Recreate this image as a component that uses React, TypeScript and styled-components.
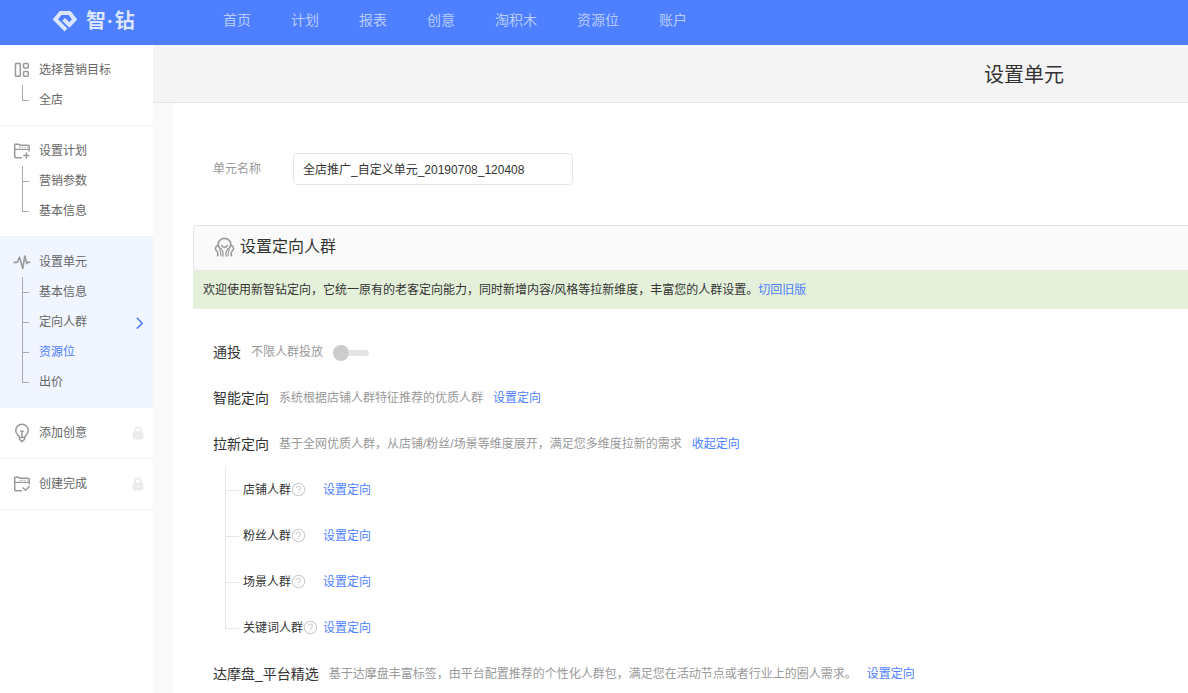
import React, { useState } from 'react';
import styled, { createGlobalStyle } from 'styled-components';

const GlobalStyle = createGlobalStyle`
  * { box-sizing: border-box; }
  body {
    margin: 0;
    background: #fff;
    color: #333;
    font: 12px/20px "Liberation Sans", "Noto Sans CJK SC", sans-serif;
  }
  h1, h2, h3, p, ul { margin: 0; padding: 0; font-weight: 400; }
  ul { list-style: none; }
  svg { display: block; flex: none; }
`;

const Page = styled.div`
  display: flex;
  flex-direction: column;
  height: 100vh;
`;

const Header = styled.header`
  display: flex;
  flex: none;
  height: 45px;
  padding-left: 52px;
  background: #4d7fff;
`;

const Logo = styled.a`
  display: flex;
  align-items: center;
  gap: 8px;
  width: 171px;
  height: 42px;
  color: #dbe5ff;
  text-decoration: none;
`;

const LogoText = styled.span`
  display: flex;
  gap: 1px;
  font-size: 20px;
  line-height: 24px;
  font-weight: 700;
`;

const Nav = styled.nav`
  display: flex;
  gap: 40px;
  height: 40px;
  align-items: center;
`;

const NavLink = styled.a`
  color: #b8ccff;
  font-size: 14px;
  text-decoration: none;
  white-space: nowrap;
`;

const Body = styled.div`
  display: flex;
  flex: 1;
  min-height: 0;
`;

const Sidebar = styled.aside`
  flex: none;
  width: 153px;
  background: #fff;
`;

const Step = styled.section<{ $active?: boolean }>`
  padding: 10px 0;
  background: ${(p) => (p.$active ? '#f0f5ff' : '#fff')};
  border-bottom: 1px solid ${(p) => (p.$active ? '#f0f5ff' : '#f2f2f2')};
`;

const StepHead = styled.div`
  display: flex;
  align-items: center;
  height: 30px;
  padding: 0 9px 0 13px;
`;

const StepTitle = styled.h3`
  flex: 1;
  padding-left: 8px;
  color: #666;
  font-size: 12px;
`;

const StepItem = styled.li`
  display: flex;
  height: 30px;
  padding: 0 9px 0 22px;
`;

const StepLink = styled.a<{ $current?: boolean }>`
  display: flex;
  flex: 1;
  align-items: center;
  justify-content: space-between;
  padding-left: 10px;
  color: ${(p) => (p.$current ? '#4d7fff' : '#666')};
  text-decoration: none;
`;

const Branch = styled.span<{ $width: number; $color: string; $last: boolean }>`
  display: flex;
  flex: none;
  flex-direction: column;
  width: ${(p) => p.$width}px;
  height: 100%;

  &::before {
    content: '';
    height: 50%;
    border: solid ${(p) => p.$color};
    border-width: 0 0 1px 1px;
  }

  &::after {
    content: '';
    height: 50%;
    border-left: 1px solid ${(p) => (p.$last ? 'transparent' : p.$color)};
  }
`;

const Main = styled.main`
  display: flex;
  flex: 1;
  flex-direction: column;
  min-width: 0;
`;

const TitleBar = styled.div`
  display: flex;
  flex: none;
  align-items: center;
  justify-content: flex-end;
  height: 58px;
  padding: 2px 124px 0 0;
  background: #f4f4f4;
  border-bottom: 1px solid #e5e5e5;
`;

const PageTitle = styled.h1`
  font-size: 20px;
  line-height: 28px;
`;

const Content = styled.div`
  flex: 1;
  min-height: 0;
  padding-left: 20px;
  border-left: 20px solid #fafafa;
  overflow: auto;
  scrollbar-width: none;
`;

const Field = styled.div`
  display: flex;
  align-items: center;
  padding: 50px 20px 40px;
`;

const FieldLabel = styled.label`
  width: 80px;
  color: #999;
`;

const TextInput = styled.input`
  width: 280px;
  height: 32px;
  padding: 0 9px 2px;
  border: 1px solid #e5e5e5;
  border-radius: 4px;
  background: #fff;
  color: #333;
  font: inherit;
  outline: none;
`;

const PanelHead = styled.div`
  display: flex;
  align-items: center;
  gap: 5px;
  height: 46px;
  padding: 0 20px 2px;
  background: #fafafa;
  border: 1px solid #e5e5e5;
  border-right: 0;
  border-radius: 4px 0 0 4px;
  color: #999;
`;

const PanelTitle = styled.h2`
  color: #333;
  font-size: 16px;
  line-height: 24px;
`;

const Notice = styled.p`
  padding: 9px 10px;
  background: #e4f0d9;
`;

const ActionLink = styled.a`
  color: #4d7fff;
  text-decoration: none;
  white-space: nowrap;
`;

const Targets = styled.div`
  padding: 20px;
`;

const TargetRow = styled.div`
  display: flex;
  align-items: center;
  gap: 10px;
  height: 46px;
  white-space: nowrap;
`;

const TargetName = styled.h3`
  font-size: 14px;
`;

const Hint = styled.span`
  color: #999;
`;

const Switch = styled.input`
  appearance: none;
  display: flex;
  align-items: center;
  width: 36px;
  height: 16px;
  margin: 2px 0 0;
  cursor: pointer;

  &::before {
    content: '';
    order: ${(p) => (p.checked ? 1 : 0)};
    width: 16px;
    height: 16px;
    border-radius: 50%;
    background: ${(p) => (p.checked ? '#4d7fff' : '#ccc')};
  }

  &::after {
    content: '';
    flex: 1;
    height: 6px;
    border-radius: 0 3px 3px 0;
    background: #e5e5e5;
  }
`;

const SubTarget = styled.li`
  display: flex;
  align-items: center;
  height: 46px;
  padding-left: 12px;
`;

const SubName = styled.span`
  display: flex;
  align-items: center;
  width: 84px;
  padding-left: 4px;
  white-space: nowrap;
`;

const GoalIcon = () => (
  <svg width="18" height="18" viewBox="0 0 18 18" fill="none" stroke="#999" strokeWidth="1.5">
    <rect x="2.5" y="2.5" width="4.8" height="12.8" rx=".6" />
    <rect x="10.5" y="2.5" width="4.8" height="4.6" rx="1" />
    <rect x="10.5" y="10.5" width="4.8" height="4.8" rx="1" />
  </svg>
);

const FolderIcon = ({ done }: { done?: boolean }) => (
  <svg width="18" height="18" viewBox="0 0 18 18" fill="none" stroke="#999" strokeWidth="1.5" strokeLinejoin="round">
    <path d="M9 15.8H3.4Q1.7 15.8 1.7 14.1V2.2H5.4L6.8 3.2H14.9Q16.2 3.2 16.2 4.5V9.4" />
    <path d="M1.7 7.4H16.2" strokeWidth="1.2" />
    <path d="M6.4 5.3H14.6" strokeDasharray="1.3 1.2" strokeWidth="1" />
    {done ? <path d="M9.7 12.5L12.5 15.3L16.6 11.2" /> : <path d="M13.4 10.6V16.6M10.4 13.6H16.4" />}
  </svg>
);

const PulseIcon = () => (
  <svg width="18" height="18" viewBox="0 0 18 18" fill="none" stroke="#999" strokeWidth="1.6" strokeLinejoin="round" strokeLinecap="round">
    <path d="M1.2 9.4H4.3L6.5 4.2L9.8 15.4L11.8 3L13.8 10.6L14.6 9.4H16.6" />
  </svg>
);

const BulbIcon = () => (
  <svg width="18" height="20" viewBox="0 0 18 20" fill="none" stroke="#999" strokeWidth="1.5" strokeLinejoin="round">
    <path d="M6.3 14.4Q6.3 13.2 4.7 11.9A6.2 6.2 0 1 1 13.3 11.9Q11.7 13.2 11.7 14.4Z" />
    <path d="M6.4 14.5V16.2L9 18.6L11.6 16.2V14.5" />
    <path d="M9 14V8.2M7.2 8.3H10.8" />
  </svg>
);

const LockIcon = () => (
  <svg width="12" height="14" viewBox="0 0 12 14" fill="none">
    <path d="M3.2 7V4.2A2.8 2.8 0 0 1 8.8 4.2V7" stroke="#ebebeb" strokeWidth="1.8" />
    <rect x=".6" y="5.4" width="10.8" height="8" rx="1.8" fill="#ebebeb" />
    <path d="M6 8.4V10.2" stroke="#fff" strokeWidth="1" />
  </svg>
);

const ChevronIcon = () => (
  <svg width="9" height="14" viewBox="0 0 9 14" fill="none" stroke="#4d7fff" strokeWidth="1.6">
    <path d="M1.8 2.8L7.2 8.2L1.8 13.6" />
  </svg>
);

const HelpIcon = () => (
  <svg width="15" height="16" viewBox="0 0 15 16" fill="none" stroke="#ccc" strokeWidth="1.1">
    <circle cx="7.5" cy="7.5" r="6.2" />
    <path d="M5.5 6.1A2 2 0 1 1 8.5 7.7Q7.5 8.3 7.5 9.2M7.5 10.2V11.3" />
  </svg>
);

const CrowdIcon = () => (
  <svg width="21" height="21" viewBox="0 0 21 21" fill="none" stroke="#999" strokeWidth="1.6" strokeLinecap="round">
    <path d="M7.2 12.2C4.8 10.6 4.2 8.6 4.2 7.2A6.3 5.8 0 0 1 16.8 7.2C16.8 8.6 16.2 10.6 13.8 12.2" />
    <path d="M7.6 8.6Q10.5 12.2 13.4 8.6" />
    <path d="M3.4 8.4C1.2 9.8 .9 12.6 2.6 13.8Q4.4 15 3.6 18.8M17.6 8.4C19.8 9.8 20.1 12.6 18.4 13.8Q16.6 15 17.4 18.8" />
    <path d="M5.4 13Q7.4 14.6 6.6 19M15.6 13Q13.6 14.6 14.4 19" strokeWidth="1.1" />
    <path d="M7.2 12.2Q9.6 14 8.8 19.2M13.8 12.2Q11.4 14 12.2 19.2" strokeWidth="1.3" />
  </svg>
);

const LogoMark = () => (
  <svg width="26" height="22" viewBox="0 0 26 22" fill="none" stroke="#dbe5ff" strokeWidth="4">
    <path d="M14 20L3.4 9.4L8.6 3H17.6L22.6 9.4L17.4 15L11.6 9.4" />
  </svg>
);

const navItems = ['首页', '计划', '报表', '创意', '淘积木', '资源位', '账户'];

const steps = [
  { title: '选择营销目标', icon: <GoalIcon />, items: ['全店'] },
  { title: '设置计划', icon: <FolderIcon />, items: ['营销参数', '基本信息'] },
  { title: '设置单元', icon: <PulseIcon />, items: ['基本信息', '定向人群', '资源位', '出价'], active: true },
  { title: '添加创意', icon: <BulbIcon />, items: [], locked: true },
  { title: '创建完成', icon: <FolderIcon done />, items: [], locked: true },
];

const subTargets = ['店铺人群', '粉丝人群', '场景人群', '关键词人群'];

interface TargetProps {
  name: string;
  hint: string;
  action: string;
}

const Target = ({ name, hint, action }: TargetProps) => (
  <TargetRow>
    <TargetName>{name}</TargetName>
    <Hint>{hint}</Hint>
    <ActionLink href="#">{action}</ActionLink>
  </TargetRow>
);

export default function App() {
  const [unitName, setUnitName] = useState('全店推广_自定义单元_20190708_120408');
  const [everyone, setEveryone] = useState(false);

  return (
    <Page lang="zh-CN">
      <GlobalStyle />
      <Header>
        <Logo href="#">
          <LogoMark />
          <LogoText>
            <span>智</span>
            <span>·</span>
            <span>钻</span>
          </LogoText>
        </Logo>
        <Nav>
          {navItems.map((item) => (
            <NavLink key={item} href="#">{item}</NavLink>
          ))}
        </Nav>
      </Header>
      <Body>
        <Sidebar>
          {steps.map((step) => (
            <Step key={step.title} $active={step.active}>
              <StepHead>
                {step.icon}
                <StepTitle>{step.title}</StepTitle>
                {step.locked && <LockIcon />}
              </StepHead>
              {step.items.length > 0 && (
                <ul>
                  {step.items.map((item, i) => (
                    <StepItem key={item}>
                      <Branch $width={7} $color="#aaa" $last={i === step.items.length - 1} />
                      <StepLink href="#" $current={item === '资源位'}>
                        {item}
                        {item === '定向人群' && <ChevronIcon />}
                      </StepLink>
                    </StepItem>
                  ))}
                </ul>
              )}
            </Step>
          ))}
        </Sidebar>
        <Main>
          <TitleBar>
            <PageTitle>设置单元</PageTitle>
          </TitleBar>
          <Content>
            <Field>
              <FieldLabel htmlFor="unit-name">单元名称</FieldLabel>
              <TextInput id="unit-name" type="text" value={unitName} onChange={(e) => setUnitName(e.target.value)} />
            </Field>
            <PanelHead>
              <CrowdIcon />
              <PanelTitle>设置定向人群</PanelTitle>
            </PanelHead>
            <Notice>
              欢迎使用新智钻定向，它统一原有的老客定向能力，同时新增内容/风格等拉新维度，丰富您的人群设置。
              <ActionLink href="#">切回旧版</ActionLink>
            </Notice>
            <Targets>
              <TargetRow>
                <TargetName>通投</TargetName>
                <Hint as="label" htmlFor="everyone">不限人群投放</Hint>
                <Switch
                  id="everyone"
                  type="checkbox"
                  role="switch"
                  checked={everyone}
                  onChange={(e) => setEveryone(e.target.checked)}
                />
              </TargetRow>
              <Target name="智能定向" hint="系统根据店铺人群特征推荐的优质人群" action="设置定向" />
              <Target name="拉新定向" hint="基于全网优质人群，从店铺/粉丝/场景等维度展开，满足您多维度拉新的需求" action="收起定向" />
              <ul>
                {subTargets.map((name, i) => (
                  <SubTarget key={name}>
                    <Branch $width={14} $color="#e5e5e5" $last={i === subTargets.length - 1} />
                    <SubName>
                      {name}
                      <HelpIcon />
                    </SubName>
                    <ActionLink href="#">设置定向</ActionLink>
                  </SubTarget>
                ))}
              </ul>
              <Target
                name="达摩盘_平台精选"
                hint="基于达摩盘丰富标签，由平台配置推荐的个性化人群包，满足您在活动节点或者行业上的圈人需求。"
                action="设置定向"
              />
            </Targets>
          </Content>
        </Main>
      </Body>
    </Page>
  );
}
